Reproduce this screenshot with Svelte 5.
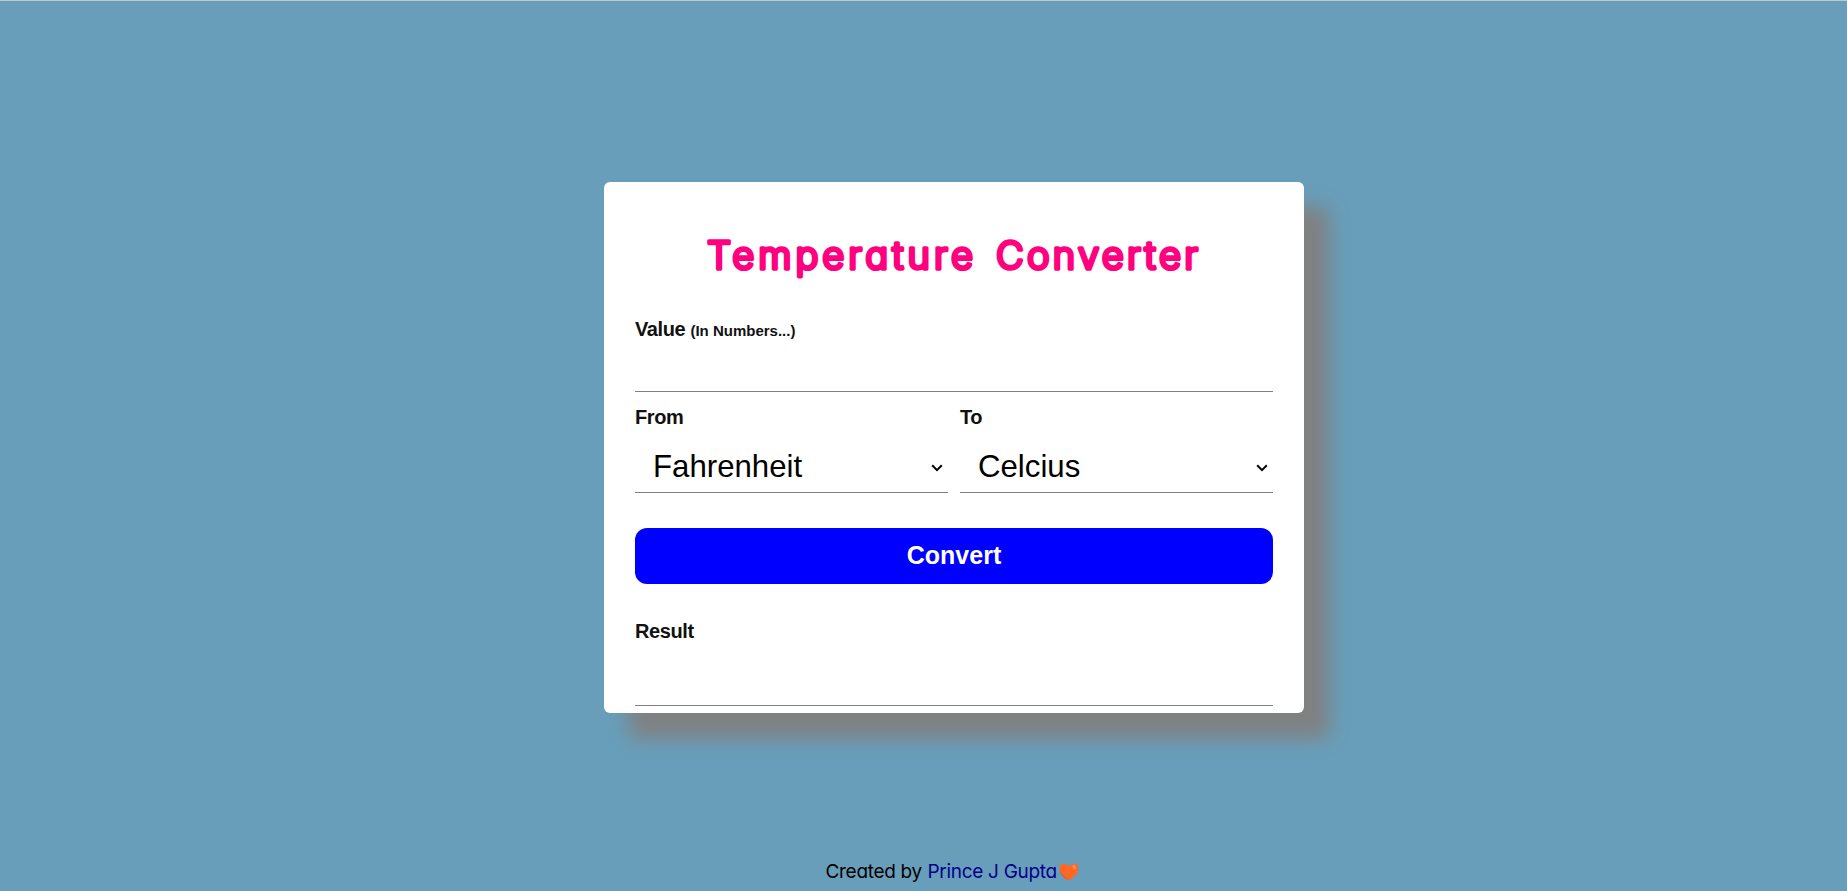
<script>
  const units = ['Fahrenheit', 'Celcius', 'Kelvin'];
  let value = $state('');
  let from = $state('Fahrenheit');
  let to = $state('Celcius');
  let result = $state('');

  function convert(event) {
    event.preventDefault();
    if (value === '') return;
    const n = Number(value);
    const c = from === 'Fahrenheit' ? ((n - 32) * 5) / 9 : from === 'Kelvin' ? n - 273.15 : n;
    const out = to === 'Fahrenheit' ? (c * 9) / 5 + 32 : to === 'Kelvin' ? c + 273.15 : c;
    result = out.toFixed(2);
  }
</script>

{#snippet picker(id, label, get, set)}
  <div class="field">
    <label for={id}>{label}</label>
    <div class="select">
      <select {id} value={get()} onchange={(e) => set(e.target.value)}>
        {#each units as unit}<option value={unit}>{unit}</option>{/each}
      </select>
      <svg width="12" height="8" viewBox="0 0 12 8"><path d="M1.2 1.3 6 6.1l4.8-4.8" fill="none" stroke="#000" stroke-width="2" /></svg>
    </div>
  </div>
{/snippet}

<main>
  <form class="card" onsubmit={convert}>
    <h1>
      <svg width="638" height="70" viewBox="0 0 638 70">
        <text x="72" y="47" textLength="266" lengthAdjust="spacing">Temperature</text>
        <text x="361" y="47" textLength="202" lengthAdjust="spacing">Converter</text>
      </svg>
    </h1>
    <label for="value">Value <small>(In Numbers...)</small></label>
    <input id="value" class="value" bind:value />
    <div class="row">
      {@render picker('from', 'From', () => from, (v) => (from = v))}
      {@render picker('to', 'To', () => to, (v) => (to = v))}
    </div>
    <button>Convert</button>
    <label for="result">Result</label>
    <input id="result" class="result" value={result} readonly />
  </form>
  <footer>
    <span class="by">Created by</span>
    <a href="#top">Prince J Gupta</a>
    <svg width="20" height="18" viewBox="0 0 20 18">
      <path d="M10 17.4C7 15.8.6 11 .6 5.6.6 2.7 2.7.8 5.2.8 7.5.8 9.2 2.2 10 4 10.8 2.2 12.5.8 14.8.8c2.5 0 4.6 1.9 4.6 4.8 0 5.4-6.4 10.200-9.4 11.800z" fill="#ff6723" />
      <ellipse cx="15.300" cy="4.300" rx="1.600" ry="2.500" transform="rotate(-38 15.300 4.300)" fill="#ff8a55" />
      <path d="M.7 7c1.600 4.100 5.500 7.200 9.300 10.400C6.300 15.700 1.300 12 .7 7z" fill="#e2502a" />
    </svg>
  </footer>
</main>

<style>
  :global(body) {
    margin: 0;
    background: #689eba;
  }

  main {
    box-sizing: border-box;
    height: 891px;
    padding: 181px 0 0 61px;
    border-top: 1px solid #c6c6c6;
    display: flex;
    flex-direction: column;
    align-items: center;
    overflow: hidden;
    font-family: 'Liberation Sans', Arial, sans-serif;
  }

  .card {
    box-sizing: border-box;
    width: 700px;
    height: 531px;
    flex: none;
    padding: 0 31px;
    border-radius: 6px;
    background: #fff;
    box-shadow: 25px 25px 20px #808080;
    display: flex;
    flex-direction: column;
  }

  h1 {
    height: 95px;
    margin: 0;
    padding-top: 40px;
  }

  h1 svg {
    display: block;
    overflow: visible;
  }

  h1 text {
    font-family: 'Comic Sans MS', Inter, sans-serif;
    font-feature-settings: 'cv11' 1;
    font-size: 38px;
    font-weight: 300;
    fill: #ff007f;
    stroke: #ff007f;
    stroke-width: 3.6px;
    stroke-linejoin: round;
  }

  label {
    height: 24px;
    font-size: 20px;
    line-height: 24px;
    font-weight: 700;
    letter-spacing: -0.4px;
    color: #111;
  }

  small {
    font-size: 15px;
    letter-spacing: 0;
  }

  input,
  select {
    box-sizing: border-box;
    width: 100%;
    margin: 0;
    padding: 0 18px;
    border: 0;
    border-bottom: 1px solid #808080;
    border-radius: 0;
    outline: 0;
    background: transparent;
    color: #000;
    font: 31.2px 'Liberation Sans', Arial, sans-serif;
  }

  .value {
    height: 51px;
  }

  .row {
    display: grid;
    grid-template-columns: 1fr 1fr;
    gap: 12px;
    margin-top: 13px;
  }

  .field {
    display: flex;
    flex-direction: column;
  }

  .select {
    display: grid;
    align-items: center;
  }

  .select > * {
    grid-area: 1 / 1;
  }

  select {
    height: 64px;
    padding: 11px 17px 0 18px;
    appearance: none;
  }

  .select svg {
    justify-self: end;
    margin: 13px 5px 0 0;
    pointer-events: none;
  }

  button {
    height: 56px;
    margin: 35px 0;
    padding: 0 0 2px;
    flex: none;
    border: 0;
    border-radius: 12px;
    background: #00f;
    color: #fff;
    font: 700 25px 'Liberation Sans', Arial, sans-serif;
  }

  .result {
    height: 63px;
  }

  footer {
    display: flex;
    align-items: center;
    width: 253px;
    height: 28px;
    margin: 145px 4px 0 0;
    white-space: nowrap;
    font: 400 19px / 28px 'Comic Sans MS', Inter, sans-serif;
    font-feature-settings: 'cv11' 1;
    letter-spacing: -0.3px;
    color: #000;
  }

  .by {
    width: 102px;
  }

  a {
    width: 131px;
    color: #00008b;
    text-decoration: none;
  }

  footer svg {
    flex: none;
  }
</style>
